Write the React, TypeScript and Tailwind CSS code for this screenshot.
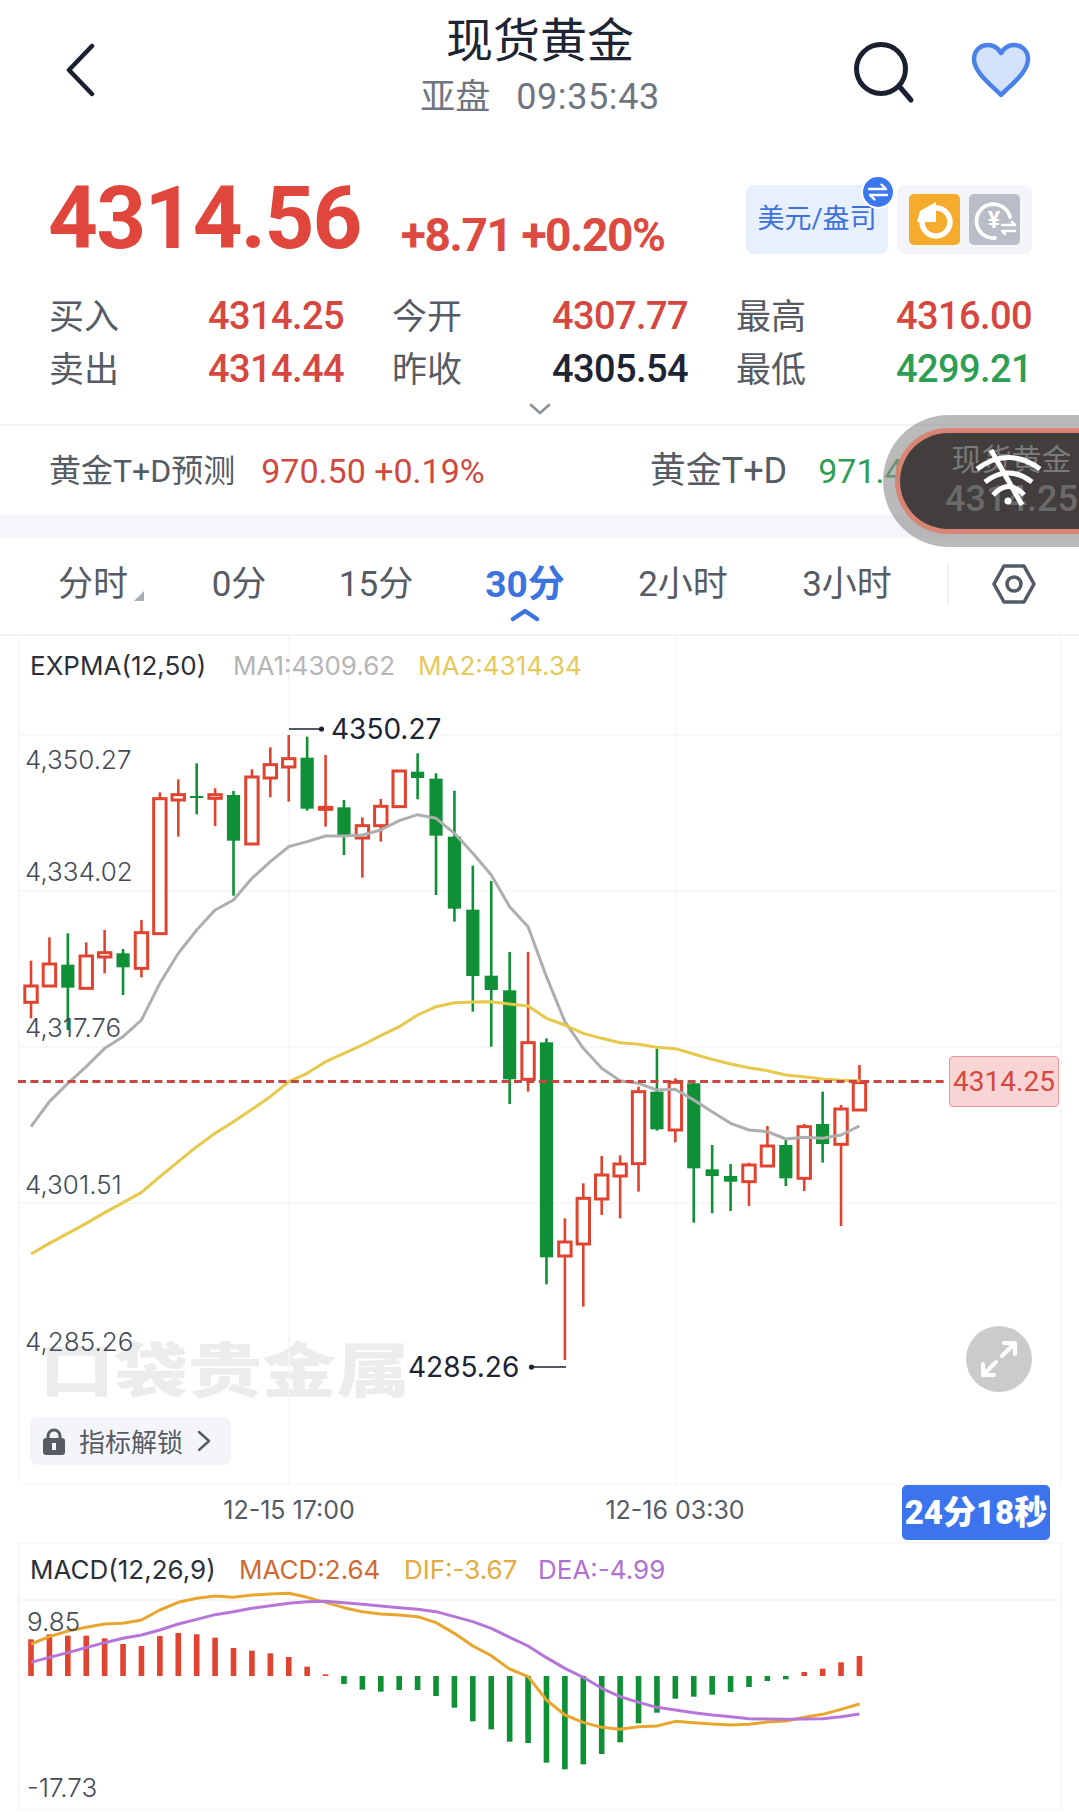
import React from "react";

const FONT = { fontFamily: '"Roboto","Noto Sans CJK SC",sans-serif' };

// candle: [hi, top, bottom, lo, isRed]; y values measured in 1/3 px from y=690
const C: [number, number, number, number, number][] = [
  [812,888,937,985,1],[742,822,888,888,1],[730,824,893,1020,0],[757,798,895,895,1],[720,788,801,850,1],
  [777,790,832,915,0],[690,728,835,862,1],[307,326,731,731,1],[268,314,330,440,1],[220,318,322,373,0],
  [295,314,325,408,1],[303,315,452,617,0],[238,261,462,462,1],[172,224,264,322,1],[135,206,231,335,1],
  [140,203,356,362,0],[195,352,358,410,1],[330,352,435,495,0],[382,407,444,563,1],[327,349,407,455,1],
  [243,243,350,350,1],[190,245,264,328,0],[250,266,437,615,0],[302,440,656,695,0],[527,659,858,965,0],
  [573,857,900,1070,0],[786,901,1168,1242,0],[786,1058,1168,1205,1],[1045,1057,1702,1783,0],[1585,1656,1698,2010,1],
  [1480,1525,1662,1850,1],[1398,1455,1527,1575,1],[1396,1422,1458,1585,1],[1190,1205,1421,1505,1],[1075,1205,1318,1322,0],
  [1165,1177,1320,1357,1],[1172,1180,1435,1598,0],[1365,1438,1458,1570,0],[1422,1458,1475,1563,0],[1418,1425,1475,1548,1],
  [1308,1368,1428,1428,1],[1348,1365,1465,1488,0],[1302,1310,1465,1503,1],[1205,1302,1362,1418,0],[1245,1257,1363,1608,1],
  [1125,1178,1260,1260,1],
];
const MA1 = [1310,1235,1180,1130,1075,1040,990,880,790,720,660,630,565,515,470,455,438,438,435,420,392,374,385,430,490,555,650,710,860,995,1075,1135,1172,1180,1200,1198,1230,1265,1300,1320,1325,1347,1342,1345,1335,1308];
const MA2 = [1692,1660,1630,1600,1568,1538,1507,1460,1415,1370,1330,1295,1258,1220,1175,1150,1115,1090,1065,1037,1010,975,950,938,936,935,942,948,985,1005,1030,1045,1058,1063,1072,1076,1092,1108,1122,1133,1142,1155,1160,1167,1171,1172];
const MACD = [358,343,347,347,355,372,378,348,339,343,353,384,392,400,411,440,463,492,509,515,510,510,528,563,604,628,665,669,728,748,733,702,667,610,578,536,530,524,516,501,483,478,456,446,427,408];
const DIF = [372,350,333,322,312,310,300,270,247,235,228,232,225,222,220,232,247,263,275,282,285,290,308,340,378,407,447,470,540,585,607,622,628,620,618,604,608,612,615,613,606,603,592,583,568,552];
const DEA = [427,412,398,383,368,355,345,330,312,298,284,275,265,257,250,245,244,248,253,258,263,268,275,290,305,325,352,378,413,445,472,505,530,547,562,570,578,585,590,596,597,598,597,596,590,582];

const X = (i: number) => 31 + i * 18.41;
const Y = (z: number) => 690 + z / 3;
const Y2 = (z: number) => 1520 + z / 3;
const RED = "#e0432f";
const GREEN = "#0f8f36";

function Candle({ d, i }: { d: [number, number, number, number, number]; i: number }) {
  const x = X(i);
  const [h, t, b, l, red] = d.map((v, k) => (k < 4 ? Y(v) : v)) as number[];
  if (red) {
    return (
      <g stroke={RED} fill="none">
        <line x1={x} x2={x} y1={h} y2={t} strokeWidth={2.6} />
        <line x1={x} x2={x} y1={b} y2={l} strokeWidth={2.6} />
        <rect x={x - 6.2} y={t} width={12.4} height={b - t} strokeWidth={3} fill="#fff" />
      </g>
    );
  }
  return (
    <g>
      <line x1={x} x2={x} y1={h} y2={l} stroke={GREEN} strokeWidth={2.6} />
      <rect x={x - 6.6} y={t} width={13.2} height={Math.max(b - t, 2)} fill={GREEN} />
    </g>
  );
}

function CandleChart() {
  const pts1 = MA1.map((v, i) => `${X(i)},${Y(v)}`).join(" ");
  const pts2 = MA2.map((v, i) => `${X(i)},${Y(v)}`).join(" ");
  return (
    <svg className="relative block" width={1079} height={849} viewBox="0 636 1079 849">
      <g stroke="#f6f6f6" strokeWidth={1.5}>
        <line x1={18.5} x2={18.5} y1={636} y2={1485} />
        <line x1={1061} x2={1061} y1={636} y2={1485} />
        <line x1={289} x2={289} y1={636} y2={1485} />
        <line x1={675.5} x2={675.5} y1={636} y2={1485} />
        <line x1={18} x2={1061} y1={735} y2={735} />
        <line x1={18} x2={1061} y1={891} y2={891} />
        <line x1={18} x2={1061} y1={1047} y2={1047} />
        <line x1={18} x2={1061} y1={1203} y2={1203} />
        <line x1={18} x2={1061} y1={1485} y2={1485} />
      </g>
      {C.map((d, i) => <Candle key={i} d={d} i={i} />)}
      <polyline points={pts1} fill="none" stroke="#aeaeae" strokeWidth={3} strokeLinejoin="round" />
      <polyline points={pts2} fill="none" stroke="#e6c94a" strokeWidth={3} strokeLinejoin="round" />
      <line x1={18} x2={945} y1={1081.5} y2={1081.5} stroke="#c9473f" strokeWidth={3} strokeDasharray="8 4.4" />
      <line x1={289} x2={320} y1={729} y2={729} stroke="#1d2433" strokeWidth={1.5} />
      <circle cx={321.5} cy={729} r={2.6} fill="#1d2433" />
      <line x1={531} x2={566} y1={1367} y2={1367} stroke="#1d2433" strokeWidth={1.5} />
      <circle cx={531.5} cy={1367} r={2.6} fill="#1d2433" />
    </svg>
  );
}

function MacdChart() {
  const zero = 468;
  return (
    <svg className="block" width={1079} height={268} viewBox="0 1542 1079 268">
      <g stroke="#f3f3f3" strokeWidth={1.5}>
        <line x1={18.5} x2={18.5} y1={1542} y2={1810} />
        <line x1={1061} x2={1061} y1={1542} y2={1810} />
        <line x1={18} x2={1061} y1={1542.5} y2={1542.5} />
        <line x1={18} x2={1061} y1={1600} y2={1600} />
        <line x1={18} x2={1061} y1={1810} y2={1810} />
      </g>
      {MACD.map((v, i) => {
        const up = v < zero;
        const y = up ? Y2(v) : Y2(zero);
        return <rect key={i} x={X(i) - 2.8} y={y} width={5.6} height={Math.abs(v - zero) / 3} fill={up ? RED : GREEN} />;
      })}
      <polyline points={DIF.map((v, i) => `${X(i)},${Y2(v)}`).join(" ")} fill="none" stroke="#e8a62f" strokeWidth={3} strokeLinejoin="round" />
      <polyline points={DEA.map((v, i) => `${X(i)},${Y2(v)}`).join(" ")} fill="none" stroke="#b676d8" strokeWidth={3} strokeLinejoin="round" />
    </svg>
  );
}

function Stat({ label, value, color }: { label: string; value: string; color: string }) {
  return (
    <div className="flex items-center justify-between h-[53px]">
      <span className="mt-[4px] text-[35px] leading-none text-[#565b64]">{label}</span>
      <span className={`text-[38px] leading-none font-medium tracking-[-0.6px] ${color}`}>{value}</span>
    </div>
  );
}

export default function App() {
  return (
    <div className="relative w-[1079px] h-[1812px] overflow-hidden bg-white" style={FONT}>
      {/* Header */}
      <header className="flex h-[185px]">
        <div className="w-[300px] pl-[64px] pt-[43px]">
          <svg width="32" height="54" viewBox="0 0 32 54" fill="none" stroke="#1b2030" strokeWidth="4.5" strokeLinecap="round" strokeLinejoin="round">
            <path d="M28 3 L5 27 L28 51" />
          </svg>
        </div>
        <div className="w-[480px] flex flex-col items-center pt-[12px]">
          <div className="h-[56px] flex items-center text-[47px] leading-none text-[#1d2433]">现货黄金</div>
          <div className="mt-[7px] h-[44px] flex items-center gap-[26px] text-[35px] leading-none text-[#6f7580]">
            <span>亚盘</span>
            <span className="text-[36px] tracking-[0.6px]">09:35:43</span>
          </div>
        </div>
        <div className="flex items-start pt-[42px] pl-[73px] gap-[59px]">
          <svg width="62" height="62" viewBox="0 0 62 62" fill="none" stroke="#1b2030" strokeWidth="5" strokeLinecap="round">
            <ellipse cx="28" cy="27" rx="24.5" ry="24.5" />
            <path d="M46 44 L58 58" />
          </svg>
          <svg width="62" height="58" viewBox="0 0 62 58" className="ml-[-4px]">
            <path d="M31 53 C20 42 4 30 4 17 C4 8 11 3 18 3 C24 3 28 6 31 11 C34 6 38 3 44 3 C51 3 58 8 58 17 C58 30 42 42 31 53 Z" fill="#d4e2fb" stroke="#4a82ea" strokeWidth="4.5" strokeLinejoin="round" />
          </svg>
        </div>
      </header>

      {/* Price row */}
      <section className="flex items-end h-[69px] pl-[48px]">
        <div className="text-[87px] font-bold leading-[72px] text-[#e0463c] tracking-[-1.7px]">4314.56</div>
        <div className="ml-[40px] text-[46px] font-bold leading-[38px] text-[#dc4a41] tracking-[-1.4px] whitespace-pre">+8.71 +0.20%</div>
        <div className="ml-auto mr-[47px] flex gap-[9px]">
          <div className="relative w-[142px] h-[69px] flex items-center justify-center rounded-[8px] bg-[#e8effd] text-[27px] leading-none text-[#3d72da]">
            美元/盎司
            <div className="absolute right-[-7px] top-[-10px] w-[34px] h-[34px] rounded-full bg-[#3b78ee] border-2 border-white flex items-center justify-center">
              <svg width="22" height="20" viewBox="0 0 22 20" fill="none" stroke="#fff" strokeWidth="2.4" strokeLinecap="round" strokeLinejoin="round">
                <path d="M2 7 H19 L14.5 2.5" />
                <path d="M20 13 H3 L7.5 17.5" />
              </svg>
            </div>
          </div>
          <div className="w-[135px] h-[69px] rounded-[8px] bg-[#f3f5f9] flex items-center justify-center gap-[9px]">
            <div className="w-[51px] h-[51px] rounded-[5px] bg-[#f5ab2c] flex items-center justify-center">
              <svg width="42" height="44" viewBox="0 0 42 44" fill="none">
                <circle cx="22" cy="24" r="14" stroke="#fff" strokeWidth="5.5" />
                <path d="M22 4 L22 24 L3 24 L6 13 Z" fill="#fff" />
              </svg>
            </div>
            <div className="w-[51px] h-[51px] rounded-[5px] bg-[#b8bdc7] flex items-center justify-center">
              <svg width="46" height="46" viewBox="0 0 46 46" fill="none">
                <path d="M38 20 A17 17 0 1 0 23 41" stroke="#fff" strokeWidth="3.8" strokeLinecap="round" />
                <text x="22" y="31" textAnchor="middle" fontSize="23" fontWeight="700" fill="#fff" fontFamily="Roboto">¥</text>
                <path d="M30 28 H43 L40 25 M43 34 H30 L33 37" stroke="#fff" strokeWidth="2.6" strokeLinecap="round" strokeLinejoin="round" />
              </svg>
            </div>
          </div>
        </div>
      </section>

      {/* Stats */}
      <section className="mt-[35px] pl-[49px] grid grid-cols-[295px_296px_296px] gap-x-[48px]">
        <Stat label="买入" value="4314.25" color="text-[#d5473f]" />
        <Stat label="今开" value="4307.77" color="text-[#d5473f]" />
        <Stat label="最高" value="4316.00" color="text-[#d5473f]" />
        <Stat label="卖出" value="4314.44" color="text-[#d5473f]" />
        <Stat label="昨收" value="4305.54" color="text-[#1d2433]" />
        <Stat label="最低" value="4299.21" color="text-[#2f9e55]" />
      </section>
      <div className="h-[31px] flex justify-center pt-[8px] border-b-2 border-[#f1f2f4]">
        <svg width="24" height="12" viewBox="0 0 24 12" fill="none" stroke="#8b9098" strokeWidth="2.6" strokeLinecap="round" strokeLinejoin="round">
          <path d="M3 2 L12 10 L21 2" />
        </svg>
      </div>

      {/* Ticker */}
      <section className="h-[89px] flex items-center pl-[49px] whitespace-nowrap">
        <span className="text-[32px] leading-none text-[#565b64]">黄金T+D预测</span>
        <span className="ml-[26px] text-[34px] leading-none text-[#d0493f]">970.50 +0.19%</span>
        <span className="ml-[165px] text-[36px] leading-none text-[#565b64]">黄金T+D</span>
        <span className="ml-[31px] text-[34px] leading-none text-[#2f9e55]">971.42 -0.0</span>
      </section>
      <div className="h-[23px] bg-[#f4f6fa]" />

      {/* Tabs */}
      <nav className="h-[98px] flex items-center pl-[22px] pb-[4px] border-b-2 border-[#f1f2f4] text-[35px] leading-none text-[#565b64]">
        <div className="relative w-[142px] text-center">
          分时
          <span className="absolute left-[112px] bottom-[1px] w-0 h-0 border-l-[10px] border-l-transparent border-b-[10px] border-b-[#a9adb4]" />
        </div>
        <div className="w-[150px] text-center">0分</div>
        <div className="w-[124px] text-center">15分</div>
        <div className="relative w-[174px] text-center font-bold text-[#3b74e0] text-[37px]">
          30分
          <svg className="absolute left-[72px] top-[42px]" width="30" height="14" viewBox="0 0 30 14" fill="none" stroke="#3b74e0" strokeWidth="4.5" strokeLinecap="round" strokeLinejoin="round">
            <path d="M3 11 L15 3 L27 11" />
          </svg>
        </div>
        <div className="w-[142px] text-center">2小时</div>
        <div className="w-[186px] text-center">3小时</div>
        <div className="ml-[7px] w-[2px] h-[42px] bg-[#f0f1f3]" />
        <svg className="ml-[42px]" width="46" height="42" viewBox="0 0 46 42" fill="none" stroke="#555b66" strokeWidth="3.6" strokeLinejoin="round">
          <path d="M13 3 H33 L43 21 L33 39 H13 L3 21 Z" />
          <circle cx="23" cy="21" r="7" />
        </svg>
      </nav>

      {/* Candle chart */}
      <section className="relative h-[849px] font-[family-name:Inter]">
        <div className="absolute left-[40px] top-[690px] text-[74px] leading-[80px] font-black font-[family-name:'Noto_Sans_CJK_SC'] text-[#ececec] whitespace-nowrap scale-y-[0.8]">口袋贵金属</div>
        <CandleChart />
        <div className="absolute left-[30px] top-[30px] -translate-y-1/2 flex text-[26px] leading-none whitespace-nowrap">
          <span className="w-[203px] text-[#2b303a]">EXPMA(12,50)</span>
          <span className="w-[185px] text-[#b5b5b5]">MA1:4309.62</span>
          <span className="text-[#e5c95a]">MA2:4314.34</span>
        </div>
        <span className="absolute left-[25px] top-[124px] -translate-y-1/2 text-[26px] leading-none font-light text-[#454b55]">4,350.27</span>
        <span className="absolute left-[25px] top-[236px] -translate-y-1/2 text-[26px] leading-none font-light text-[#454b55]">4,334.02</span>
        <span className="absolute left-[25px] top-[392px] -translate-y-1/2 text-[26px] leading-none font-light text-[#454b55]">4,317.76</span>
        <span className="absolute left-[25px] top-[549px] -translate-y-1/2 text-[26px] leading-none font-light text-[#454b55]">4,301.51</span>
        <span className="absolute left-[25px] top-[706px] -translate-y-1/2 text-[26px] leading-none font-light text-[#454b55]">4,285.26</span>
        <span className="absolute left-[331px] top-[93px] -translate-y-1/2 text-[28px] leading-none text-[#1d2433]">4350.27</span>
        <span className="absolute left-[408px] top-[731px] -translate-y-1/2 text-[28px] leading-none text-[#1d2433]">4285.26</span>
        <div className="absolute left-[949px] top-[420px] w-[110px] h-[51px] rounded-[4px] bg-[#f9d4d4] border border-[#e39a9a] flex items-center justify-center text-[28px] leading-none font-[family-name:Roboto] text-[#d5473f]">4314.25</div>
        <div className="absolute left-[966px] top-[690px] w-[66px] h-[66px] rounded-full bg-[#cbcbcb] flex items-center justify-center">
          <svg width="40" height="40" viewBox="0 0 40 40" fill="none" stroke="#fff" strokeWidth="4" strokeLinecap="round" strokeLinejoin="round">
            <path d="M23 17 L36 4 M25 4 H36 V15" />
            <path d="M17 23 L4 36 M15 36 H4 V25" />
          </svg>
        </div>
        <div className="absolute left-[30px] top-[781px] w-[201px] h-[48px] rounded-[8px] bg-[#f3f5f8] flex items-center pl-[13px] text-[26px] leading-none font-[family-name:'Noto_Sans_CJK_SC'] text-[#565b64]">
          <svg width="22" height="27" viewBox="0 0 22 27" fill="#565b64">
            <path d="M5 11 V8 A6 6 0 0 1 17 8 V11" fill="none" stroke="#565b64" strokeWidth="3" />
            <rect x="0" y="10" width="22" height="17" rx="3" />
            <rect x="9" y="15" width="4" height="7" fill="#f3f5f8" />
          </svg>
          <span className="ml-[14px]">指标解锁</span>
          <svg className="ml-[14px]" width="14" height="22" viewBox="0 0 14 22" fill="none" stroke="#565b64" strokeWidth="2.4" strokeLinecap="round" strokeLinejoin="round">
            <path d="M2 2 L12 11 L2 20" />
          </svg>
        </div>
      </section>

      {/* X axis */}
      <section className="h-[57px] flex items-start">
        <div className="ml-[189px] w-[200px] h-[50px] flex items-center justify-center text-[25px] leading-none font-[family-name:Inter] text-[#565b64]">12-15 17:00</div>
        <div className="ml-[186px] w-[200px] h-[50px] flex items-center justify-center text-[25px] leading-none font-[family-name:Inter] text-[#565b64]">12-16 03:30</div>
        <div className="ml-[127px] w-[148px] h-[55px] rounded-[5px] bg-[#3b74ed] flex items-center justify-center text-[33px] leading-none font-black text-white whitespace-nowrap">24分18秒</div>
      </section>

      {/* MACD */}
      <section className="relative h-[268px] font-[family-name:Inter]">
        <MacdChart />
        <div className="absolute left-[30px] top-[28px] -translate-y-1/2 flex text-[26px] leading-none whitespace-nowrap">
          <span className="w-[209px] text-[#2b303a]">MACD(12,26,9)</span>
          <span className="w-[165px] text-[#cf6a35]">MACD:2.64</span>
          <span className="w-[134px] text-[#e5a93c]">DIF:-3.67</span>
          <span className="text-[#b070d4]">DEA:-4.99</span>
        </div>
        <span className="absolute left-[27px] top-[80px] -translate-y-1/2 text-[26px] leading-none font-light text-[#454b55]">9.85</span>
        <span className="absolute left-[27px] top-[246px] -translate-y-1/2 text-[26px] leading-none font-light text-[#454b55]">-17.73</span>
      </section>

      {/* Floating widget */}
      <div className="absolute left-[883px] top-[415px] w-[196px] h-[132px] rounded-l-[66px] bg-[#8c8c8c]/60 pl-[12px] py-[13px]">
        <div className="h-[106px] rounded-l-[53px] bg-[#dc7f6f]/90 pl-[5px] py-[5px]">
          <div className="relative h-[96px] rounded-l-[48px] bg-[#3a3a3a]/95 flex flex-col items-center justify-center pl-[44px] gap-[6px]">
            <span className="text-[30px] leading-none text-[#7a7a7a] whitespace-nowrap">现货黄金</span>
            <span className="text-[36px] leading-none font-medium text-[#6a6a6a] whitespace-nowrap">4314.25</span>
            <svg className="absolute left-[74px] top-[15px]" width="70" height="60" viewBox="0 0 70 60" fill="none" stroke="#fff" strokeWidth="5">
              <path d="M3 21 Q34 -2 66 21" />
              <path d="M11 34 Q34 16 58 34" />
              <path d="M19 47 Q35 30 50 47" />
              <circle cx="34" cy="53" r="3.5" fill="#fff" stroke="none" />
              <path d="M17 2 L48 57" />
            </svg>
          </div>
        </div>
      </div>
    </div>
  );
}
